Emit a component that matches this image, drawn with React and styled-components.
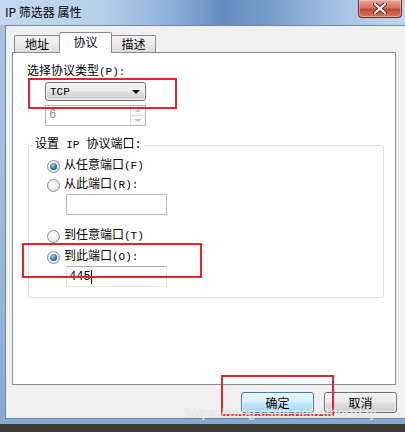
import React from "react";
import styled, { createGlobalStyle } from "styled-components";

const GlobalStyle = createGlobalStyle`
  html, body {
    margin: 0;
    padding: 0;
    background: #3c3d38;
  }
  * {
    box-sizing: border-box;
  }
`;

const uiFont = `"Liberation Mono", "Noto Sans CJK SC", monospace`;

const Screen = styled.div`
  position: relative;
  width: 405px;
  height: 432px;
  overflow: hidden;
  background: #3c3d38;
  font-family: ${uiFont};
  font-size: 12px;
  color: #000;
`;

const Window = styled.div`
  height: 424px;
  display: flex;
  flex-direction: column;
  background: linear-gradient(180deg, #a9c5e4 0%, #9dbbdf 50%, #86a8d2 100%);
`;

const TitleBar = styled.div`
  height: 25px;
  display: flex;
  align-items: flex-start;
  padding-left: 5px;
  background: linear-gradient(
    90deg,
    #c4d9ef 0%,
    #b6cfea 25%,
    #8fb1d9 42%,
    #628dbf 55%,
    #7aa1cd 68%,
    #a8c5e5 85%,
    #bcd4ec 100%
  );
`;

const Title = styled.span`
  margin-top: 5px;
  font-family: "Noto Sans CJK SC", sans-serif;
  font-size: 12px;
  line-height: 14px;
  color: #000;
`;

const CloseButton = styled.div`
  margin-left: auto;
  margin-right: 3px;
  width: 44px;
  height: 18px;
  display: flex;
  align-items: center;
  justify-content: center;
  border: 1px solid #6e2b24;
  border-top: none;
  border-radius: 0 0 4px 4px;
  background: linear-gradient(180deg, #e8a89a 0%, #d7735f 45%, #c4493a 55%, #d9775f 100%);
  box-shadow: inset 0 0 0 1px rgba(255, 220, 210, 0.45);
`;

const Client = styled.div`
  flex: 1;
  margin: 0 0 5px 5px;
  border: 1px solid #72879e;
  border-right: none;
  background: #f0f0f0;
  padding: 6px 0 0 6px;
  display: flex;
  flex-direction: column;
`;

const TabRow = styled.div`
  height: 21px;
  display: flex;
  align-items: flex-end;
  padding-left: 2px;
  margin-bottom: -1px;
  position: relative;
  z-index: 1;
`;

const Tab = styled.div`
  width: ${(p) => p.$width}px;
  height: ${(p) => (p.$active ? 21 : 17)}px;
  margin-bottom: ${(p) => (p.$active ? 0 : 1)}px;
  margin-left: ${(p) => (p.$first ? 0 : -1)}px;
  border: 1px solid #898c95;
  border-bottom: none;
  border-radius: 2px 2px 0 0;
  background: ${(p) =>
    p.$active ? "#ffffff" : "linear-gradient(180deg, #f2f2f2 0%, #ebebeb 50%, #dcdcdc 100%)"};
  display: flex;
  align-items: center;
  justify-content: center;
  padding-bottom: ${(p) => (p.$active ? 3 : 0)}px;
  font-size: 12px;
`;

const Panel = styled.div`
  width: 384px;
  height: 333px;
  border: 1px solid #898c95;
  background: #ffffff;
  padding: 12px 11px 0 14px;
  display: flex;
  flex-direction: column;
  align-items: flex-start;
`;

const Label = styled.div`
  line-height: 14px;
  white-space: nowrap;
`;

const Latin = styled.span`
  font-size: 11px;
`;

const Combo = styled.div`
  margin: 3px 0 0 18px;
  width: 101px;
  height: 19px;
  border: 1px solid #707070;
  border-radius: 3px;
  background: linear-gradient(180deg, #f2f2f2 0%, #ebebeb 45%, #dddddd 55%, #cfcfcf 100%);
  box-shadow: inset 0 0 0 1px rgba(255, 255, 255, 0.7);
  display: flex;
  align-items: center;
  justify-content: space-between;
  padding: 0 5px 0 4px;
  line-height: 14px;
`;

const Arrow = styled.span`
  width: 0;
  height: 0;
  border-left: 4px solid transparent;
  border-right: 4px solid transparent;
  border-top: ${(p) => (p.$size || 4)}px solid ${(p) => p.$color || "#000"};
`;

const UpArrow = styled.span`
  width: 0;
  height: 0;
  border-left: 3px solid transparent;
  border-right: 3px solid transparent;
  border-bottom: 3px solid #c4c4c4;
`;

const Spin = styled.div`
  margin: 4px 0 0 18px;
  width: 101px;
  height: 21px;
  border: 1px solid #b5b9bd;
  background: #ffffff;
  display: flex;
  align-items: stretch;
`;

const SpinValue = styled.span`
  flex: 1;
  padding-left: 3px;
  line-height: 19px;
  color: #8a8a8a;
`;

const SpinButtons = styled.div`
  width: 15px;
  display: flex;
  flex-direction: column;
  border-left: 1px solid #dcdcdc;
`;

const SpinButton = styled.div`
  flex: 1;
  display: flex;
  align-items: center;
  justify-content: center;
  background: #f7f7f7;
  & + & {
    border-top: 1px solid #dcdcdc;
  }
`;

const GroupBox = styled.fieldset`
  margin: 12px 0 0 1px;
  padding: 0;
  width: 356px;
  min-width: 0;
  border: 1px solid #d5dfe5;
  border-radius: 3px;
`;

const Legend = styled.legend`
  margin-left: 4px;
  padding: 0 2px;
  line-height: 14px;
  white-space: nowrap;
`;

const GroupBody = styled.div`
  padding: 5px 0 10px 18px;
  display: flex;
  flex-direction: column;
  align-items: flex-start;
`;

const RadioRow = styled.label`
  height: 18px;
  margin-top: ${(p) => p.$gap || 0}px;
  display: flex;
  align-items: center;
  gap: 4px;
  line-height: 14px;
  white-space: nowrap;
`;

const RadioDot = styled.span`
  width: 13px;
  height: 13px;
  border-radius: 50%;
  border: 1px solid #8d9095;
  background: radial-gradient(circle at 45% 40%, #ffffff 0%, #ececec 55%, #cdcdcd 100%);
  display: flex;
  align-items: center;
  justify-content: center;

  &::after {
    content: "";
    display: ${(p) => (p.$checked ? "block" : "none")};
    width: 7px;
    height: 7px;
    border-radius: 50%;
    background: radial-gradient(circle at 40% 35%, #9ed8f3 0%, #2a78ad 55%, #103f68 100%);
  }
`;

const TextBox = styled.div`
  margin-left: 19px;
  width: 101px;
  height: 21px;
  border: 1px solid;
  border-color: ${(p) => (p.$disabled ? "#b5b9bd" : "#abadb3 #dbdfe6 #e3e9ef #e2e3ea")};
  background: #ffffff;
  padding-left: 2px;
  display: flex;
  align-items: center;
  line-height: 14px;
`;

const Caret = styled.span`
  width: 1px;
  height: 14px;
  background: #000;
`;

const Footer = styled.div`
  margin-top: 7px;
  display: flex;
  justify-content: flex-end;
  gap: 10px;
  padding-right: 8px;
`;

const Button = styled.div`
  width: 73px;
  height: 21px;
  border: 1px solid ${(p) => (p.$default ? "#3c7fb1" : "#707070")};
  border-radius: 3px;
  background: ${(p) =>
    p.$default
      ? "linear-gradient(180deg, #eaf6fd 0%, #d9f0fc 45%, #bee6fd 55%, #a7d9f5 100%)"
      : "linear-gradient(180deg, #f2f2f2 0%, #ebebeb 45%, #dddddd 55%, #cfcfcf 100%)"};
  box-shadow: inset 0 0 0 1px rgba(255, 255, 255, 0.7);
  display: flex;
  align-items: center;
  justify-content: center;
  font-family: "Noto Sans CJK SC", sans-serif;
  font-size: 12px;
  line-height: 14px;
`;

const Mark = styled.div`
  position: absolute;
  left: ${(p) => p.$x}px;
  top: ${(p) => p.$y}px;
  width: ${(p) => p.$w}px;
  height: ${(p) => p.$h}px;
  border: 2px solid #e3232b;
  pointer-events: none;
`;

const Watermark = styled.div`
  position: absolute;
  left: 185px;
  top: 407px;
  font-family: "Liberation Sans", sans-serif;
  font-size: 13px;
  line-height: 12px;
  font-weight: bold;
  color: rgba(255, 255, 255, 0.7);
  text-shadow: 0 0 1px rgba(120, 120, 120, 0.4);
  white-space: nowrap;
  pointer-events: none;
`;

function CloseIcon() {
  return (
    <svg width="14" height="11" viewBox="0 0 14 11">
      <path d="M2 1 L12 10 M12 1 L2 10" stroke="#5a2620" strokeWidth="4" strokeLinecap="round" />
      <path d="M2 1 L12 10 M12 1 L2 10" stroke="#ffffff" strokeWidth="2.2" strokeLinecap="round" />
    </svg>
  );
}

function Radio({ checked, gap, children }) {
  return (
    <RadioRow $gap={gap}>
      <RadioDot $checked={checked} />
      <span>{children}</span>
    </RadioRow>
  );
}

export default function App() {
  return (
    <>
      <GlobalStyle />
      <Screen>
        <Window>
          <TitleBar>
            <Title>IP 筛选器 属性</Title>
            <CloseButton>
              <CloseIcon />
            </CloseButton>
          </TitleBar>
          <Client>
            <TabRow>
              <Tab $first $width={46}>地址</Tab>
              <Tab $active $width={53}>协议</Tab>
              <Tab $width={45}>描述</Tab>
            </TabRow>
            <Panel>
              <Label>
                选择协议类型<Latin>(P):</Latin>
              </Label>
              <Combo>
                <Latin>TCP</Latin>
                <Arrow />
              </Combo>
              <Spin>
                <SpinValue>6</SpinValue>
                <SpinButtons>
                  <SpinButton>
                    <UpArrow />
                  </SpinButton>
                  <SpinButton>
                    <Arrow $size={3} $color="#c4c4c4" />
                  </SpinButton>
                </SpinButtons>
              </Spin>
              <GroupBox>
                <Legend>
                  设置 <Latin>IP</Latin> 协议端口:
                </Legend>
                <GroupBody>
                  <Radio checked>
                    从任意端口<Latin>(F)</Latin>
                  </Radio>
                  <Radio gap={1}>
                    从此端口<Latin>(R):</Latin>
                  </Radio>
                  <TextBox $disabled />
                  <Radio gap={12}>
                    到任意端口<Latin>(T)</Latin>
                  </Radio>
                  <Radio checked gap={3}>
                    到此端口<Latin>(O):</Latin>
                  </Radio>
                  <TextBox>
                    445
                    <Caret />
                  </TextBox>
                </GroupBody>
              </GroupBox>
            </Panel>
            <Footer>
              <Button $default>确定</Button>
              <Button>取消</Button>
            </Footer>
          </Client>
        </Window>
        <Mark $x={28} $y={78} $w={149} $h={31} />
        <Mark $x={22} $y={243} $w={180} $h={35} />
        <Mark $x={221} $y={375} $w={113} $h={41} />
        <Watermark>https://blog.csdn.net/Albertday</Watermark>
      </Screen>
    </>
  );
}
